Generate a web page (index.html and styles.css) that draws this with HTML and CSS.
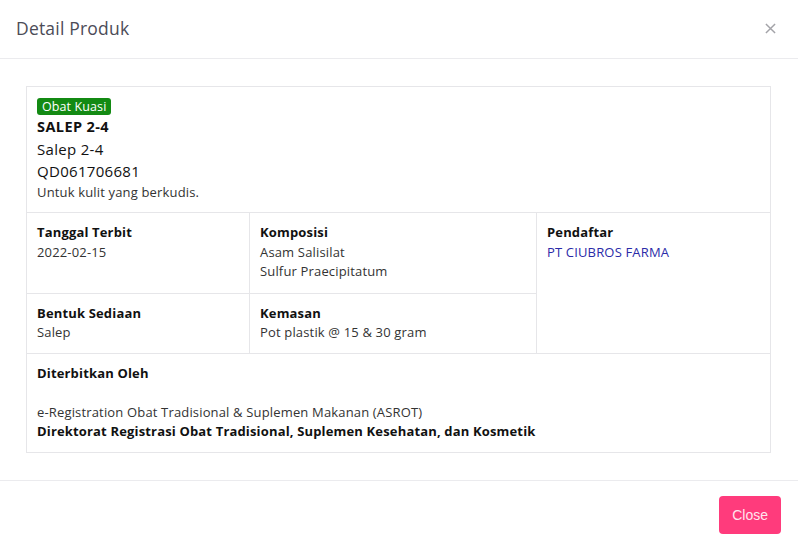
FILE: index.html
```html
<!DOCTYPE html>
<html lang="id">
<head>
    <meta charset="UTF-8">
    <meta name="viewport" content="width=device-width, initial-scale=1.0">
    <title>Detail Produk</title>
    <link rel="stylesheet" href="styles.css">
</head>
<body>
    <div class="modal">
        <div class="modal-header">
            <h5 class="modal-title">Detail Produk</h5>
            <button class="btn-x" aria-label="Tutup">
                <svg width="12" height="12" viewBox="0 0 12 12"><path d="M1 1L11 11M11 1L1 11" stroke="#a3a3a8" stroke-width="1.6" fill="none"/></svg>
            </button>
        </div>
        <div class="modal-body">
            <table class="detail-table">
                <colgroup>
                    <col class="col-a">
                    <col class="col-b">
                    <col class="col-c">
                </colgroup>
                <tr>
                    <td colspan="3">
                        <span class="badge">Obat Kuasi</span>
                        <div class="product-name">SALEP 2-4</div>
                        <div class="product-line">Salep 2-4</div>
                        <div class="product-line">QD061706681</div>
                        <div class="product-desc">Untuk kulit yang berkudis.</div>
                    </td>
                </tr>
                <tr class="row-info">
                    <td>
                        <div class="label">Tanggal Terbit</div>
                        <div>2022-02-15</div>
                    </td>
                    <td>
                        <div class="label">Komposisi</div>
                        <div>Asam Salisilat</div>
                        <div>Sulfur Praecipitatum</div>
                    </td>
                    <td rowspan="2">
                        <div class="label">Pendaftar</div>
                        <a href="#" class="link">PT CIUBROS FARMA</a>
                    </td>
                </tr>
                <tr>
                    <td>
                        <div class="label">Bentuk Sediaan</div>
                        <div>Salep</div>
                    </td>
                    <td>
                        <div class="label">Kemasan</div>
                        <div>Pot plastik @ 15 &amp; 30 gram</div>
                    </td>
                </tr>
                <tr>
                    <td colspan="3">
                        <div class="label">Diterbitkan Oleh</div>
                        <br>
                        <div>e-Registration Obat Tradisional &amp; Suplemen Makanan (ASROT)</div>
                        <div class="label">Direktorat Registrasi Obat Tradisional, Suplemen Kesehatan, dan Kosmetik</div>
                    </td>
                </tr>
            </table>
        </div>
        <div class="modal-footer">
            <button class="btn-close">Close</button>
        </div>
    </div>
</body>
</html>
```

FILE: styles.css
```css
body {
    margin: 0;
    background-color: #fff;
    font-family: "Open Sans", "Liberation Sans", sans-serif;
    color: #333;
}
.modal {
    background-color: #fff;
    width: 798px;
    height: 550px;
    display: flex;
    flex-direction: column;
}
.modal-header {
    display: flex;
    align-items: flex-start;
    justify-content: space-between;
    height: 60px;
    padding: 0 22px 0 16px;
    box-sizing: border-box;
    border-bottom: 1px solid #ebebee;
}
.modal-title {
    margin: 15px 0 0;
    font-size: 17.5px;
    line-height: 26px;
    font-weight: 500;
    letter-spacing: 0.2px;
    color: #4c4c57;
}
.btn-x {
    background: none;
    border: none;
    padding: 0;
    margin-top: 23px;
    line-height: 0;
    cursor: pointer;
}
.btn-x svg {
    width: 11px;
    height: 11px;
}
.modal-body {
    padding: 27px 27px 27px 26px;
}
.detail-table {
    width: 100%;
    border-collapse: collapse;
    font-size: 13px;
    line-height: 19.5px;
    letter-spacing: 0.16px;
}
.col-a {
    width: 223px;
}
.col-b {
    width: 287px;
}
.detail-table td {
    border: 1px solid #e6e6e9;
    padding: 10px 10px;
    vertical-align: top;
}
.row-info td {
    padding-bottom: 11px;
}
.badge {
    display: inline-block;
    background-color: #138a13;
    color: #fff;
    font-size: 12.5px;
    line-height: 17px;
    padding: 0 5px;
    letter-spacing: 0.1px;
    border-radius: 3px;
}
.product-name {
    font-size: 14.5px;
    font-weight: 700;
    color: #111;
    line-height: 22px;
    letter-spacing: 0.4px;
}
.product-line {
    font-size: 15px;
    color: #111;
    line-height: 22px;
    letter-spacing: 0.3px;
}
.product-desc {
    font-size: 13px;
    line-height: 20px;
}
.label {
    font-weight: 700;
    color: #111;
}
.link {
    color: #2b2ba8;
    text-decoration: none;
}
.modal-footer {
    border-top: 1px solid #ebebee;
    margin-top: auto;
    height: 70px;
    display: flex;
    align-items: center;
    justify-content: flex-end;
    padding-right: 17px;
    padding-bottom: 1px;
}
.btn-close {
    background-color: #ff3b7c;
    color: #ffe4ee;
    border: none;
    border-radius: 4px;
    height: 38px;
    padding: 0 13px;
    font-family: "Liberation Sans", Arial, sans-serif;
    font-size: 14px;
    cursor: pointer;
}
```
